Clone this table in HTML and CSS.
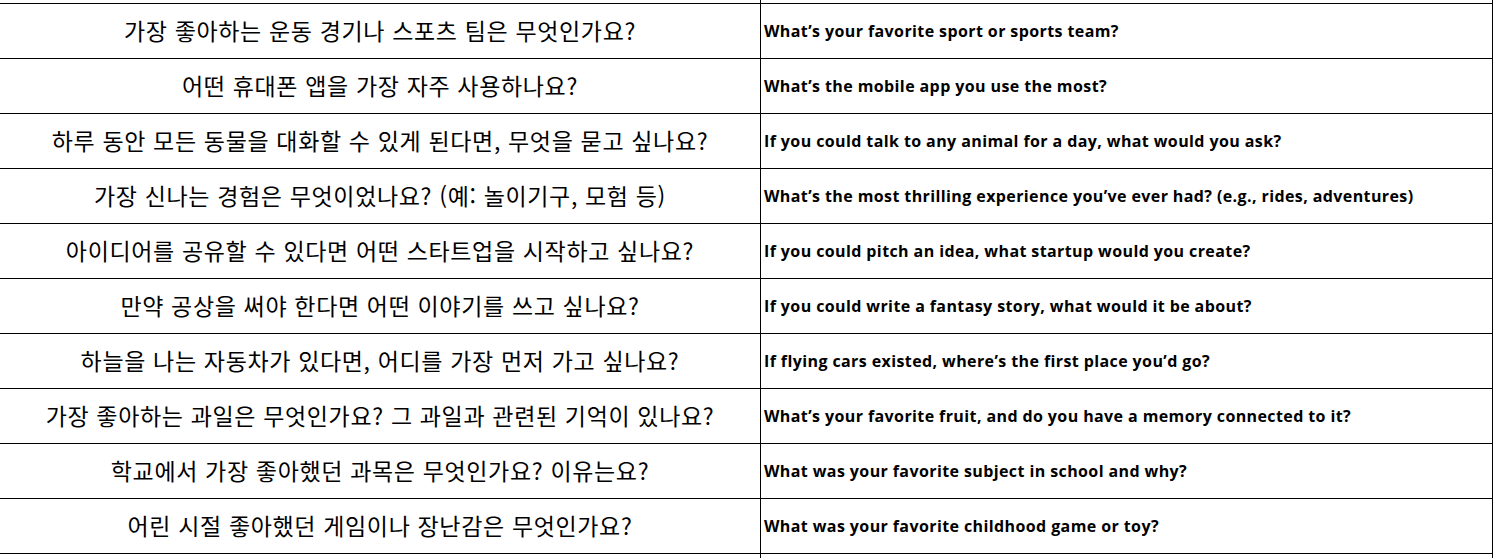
FILE: index.html
```html
<!DOCTYPE html>
<html lang="ko">
<head>
<meta charset="utf-8">
<title>Questions</title>
<link rel="stylesheet" href="styles.css">
</head>
<body>
<div class="sheet">
  <div class="row edge"><div class="ko"></div><div class="en"></div></div>
  <div class="row"><div class="ko">가장 좋아하는 운동 경기나 스포츠 팀은 무엇인가요?</div><div class="en">What’s your favorite sport or sports team?</div></div>
  <div class="row"><div class="ko">어떤 휴대폰 앱을 가장 자주 사용하나요?</div><div class="en">What’s the mobile app you use the most?</div></div>
  <div class="row"><div class="ko">하루 동안 모든 동물을 대화할 수 있게 된다면, 무엇을 묻고 싶나요?</div><div class="en">If you could talk to any animal for a day, what would you ask?</div></div>
  <div class="row"><div class="ko">가장 신나는 경험은 무엇이었나요? (예: 놀이기구, 모험 등)</div><div class="en">What’s the most thrilling experience you’ve ever had? (e.g., rides, adventures)</div></div>
  <div class="row"><div class="ko">아이디어를 공유할 수 있다면 어떤 스타트업을 시작하고 싶나요?</div><div class="en">If you could pitch an idea, what startup would you create?</div></div>
  <div class="row"><div class="ko">만약 공상을 써야 한다면 어떤 이야기를 쓰고 싶나요?</div><div class="en">If you could write a fantasy story, what would it be about?</div></div>
  <div class="row"><div class="ko">하늘을 나는 자동차가 있다면, 어디를 가장 먼저 가고 싶나요?</div><div class="en">If flying cars existed, where’s the first place you’d go?</div></div>
  <div class="row"><div class="ko">가장 좋아하는 과일은 무엇인가요? 그 과일과 관련된 기억이 있나요?</div><div class="en">What’s your favorite fruit, and do you have a memory connected to it?</div></div>
  <div class="row"><div class="ko">학교에서 가장 좋아했던 과목은 무엇인가요? 이유는요?</div><div class="en">What was your favorite subject in school and why?</div></div>
  <div class="row"><div class="ko">어린 시절 좋아했던 게임이나 장난감은 무엇인가요?</div><div class="en">What was your favorite childhood game or toy?</div></div>
  <div class="row tail"><div class="ko"></div><div class="en"></div></div>
</div>
</body>
</html>
```

FILE: styles.css
```css
html, body {
  margin: 0;
  padding: 0;
  background: #fff;
  overflow: hidden;
}
.sheet {
  width: 1493px;
  display: flex;
  flex-direction: column;
  color: #000;
}
.row {
  display: flex;
  height: 54px;
  border-top: 1px solid #000;
}
.row.edge {
  height: 3px;
  border-top: none;
}
.row.tail {
  height: 10px;
}
.ko {
  width: 760px;
  flex: none;
  display: flex;
  align-items: center;
  justify-content: center;
  box-sizing: border-box;
  font-family: "Noto Sans CJK KR", "Noto Sans", sans-serif;
  font-size: 23px;
  letter-spacing: 0.65px;
  white-space: nowrap;
  padding-bottom: 3px;
}
.en {
  flex: none;
  border-left: 1px solid #000;
  border-right: 1px solid #000;
  display: flex;
  align-items: center;
  padding-left: 3px;
  box-sizing: border-box;
  width: 733px;
  font-family: "Open Sans", "Noto Sans", sans-serif;
  font-weight: 700;
  font-size: 16px;
  letter-spacing: 0.4px;
  white-space: nowrap;
}
```
